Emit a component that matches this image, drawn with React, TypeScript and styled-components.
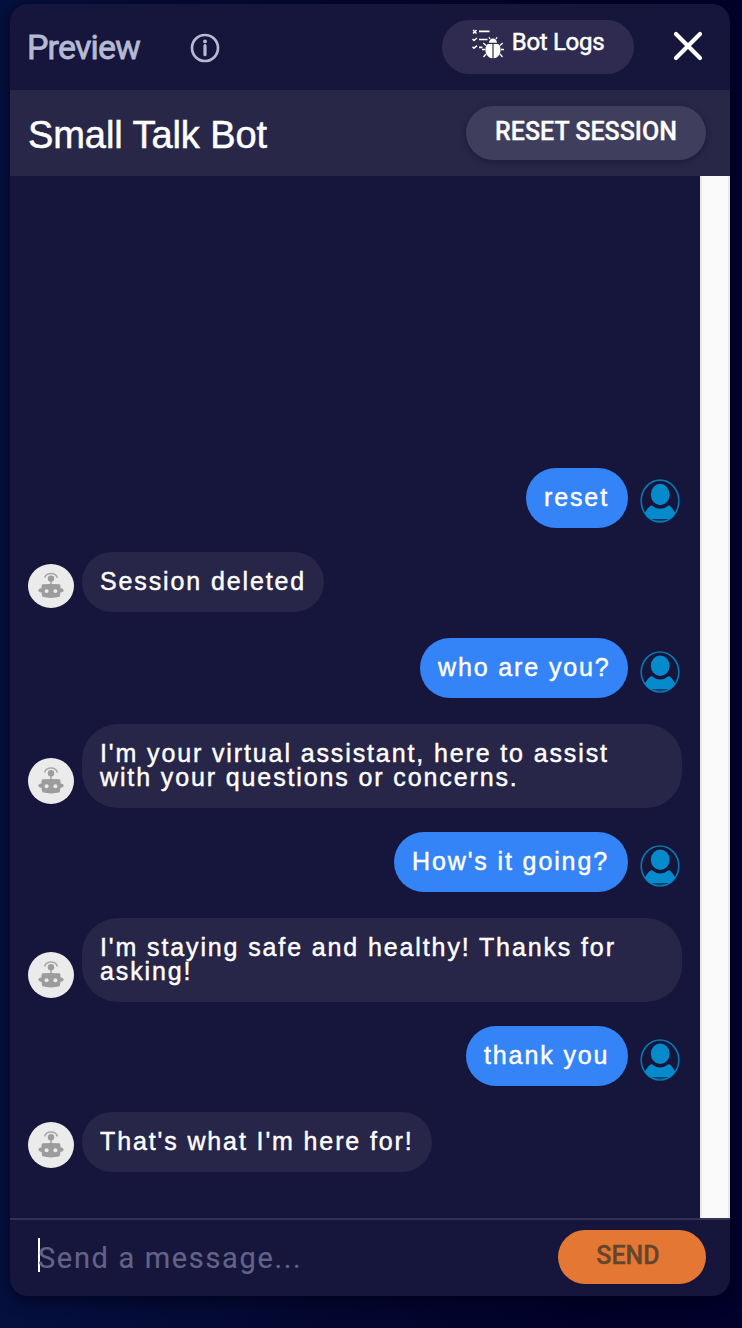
import React from "react";
import styled, { createGlobalStyle } from "styled-components";

const GlobalStyle = createGlobalStyle`
  * { box-sizing: border-box; }
  body {
    margin: 0;
    background: linear-gradient(90deg, #05103f 0%, #03072f 45%, #010129 80%, #01012c 100%);
    font-family: "Liberation Sans", Arial, sans-serif;
    overflow: hidden;
  }
`;

const Page = styled.main`
  height: 1328px;
  padding: 4px 12px 32px 10px;
`;

const Panel = styled.section`
  height: 1292px;
  display: flex;
  flex-direction: column;
  overflow: hidden;
  border-radius: 18px;
  background: #16153b;
  box-shadow: 0 4px 16px rgba(0, 0, 18, 0.65);
`;

const Header = styled.header`
  height: 86px;
  flex: none;
  display: flex;
  align-items: flex-start;
  padding: 16px 24px 0 17px;
  font-family: Roboto, sans-serif;
`;

const PreviewLabel = styled.h1`
  margin: 7px 0 0;
  width: 163px;
  font-size: 34px;
  line-height: 40px;
  font-weight: 400;
  letter-spacing: -0.85px;
  color: #b5bad3;
  -webkit-text-stroke: 0.8px #b5bad3;
`;

const InfoIcon = styled.svg`
  width: 30px;
  height: 30px;
  margin-top: 13px;
`;

const PillButton = styled.button<{ $width: number; $tone: string; $ink?: string; $raised?: boolean; $top?: number; $right?: number }>`
  width: ${(p) => p.$width}px;
  height: 54px;
  flex: none;
  display: flex;
  align-items: flex-start;
  justify-content: center;
  margin: 0;
  padding: ${(p) => p.$top ?? 8}px ${(p) => p.$right ?? 0}px 0 0;
  border: 0;
  border-radius: 27px;
  background: ${(p) => p.$tone};
  color: ${(p) => p.$ink ?? "#fff"};
  box-shadow: ${(p) => (p.$raised ? "0 2px 6px rgba(10, 8, 35, 0.4)" : "none")};
  font-family: Roboto, sans-serif;
  white-space: nowrap;
`;

const ButtonText = styled.span<{ $size: number; $weight: number; $spacing?: number }>`
  font-size: ${(p) => p.$size}px;
  line-height: 30px;
  font-weight: ${(p) => p.$weight};
  letter-spacing: ${(p) => p.$spacing ?? 0}px;
  -webkit-text-stroke: ${(p) => (p.$weight < 500 ? "0.5px" : "0.3px")} currentColor;
`;

const LogsIcon = styled.svg`
  width: 32px;
  height: 32px;
  margin-right: 8px;
`;

const Spacer = styled.div`
  flex: 1;
`;

const CloseIcon = styled.svg`
  width: 30px;
  height: 30px;
  margin: 11px 3px 0 39px;
`;

const TitleBar = styled.div`
  height: 86px;
  flex: none;
  display: flex;
  align-items: center;
  justify-content: space-between;
  padding: 0 24px 0 18px;
  background: #292748;
`;

const BotName = styled.h2`
  margin: 4px 0 0;
  font-size: 38px;
  line-height: 44px;
  font-weight: 400;
  letter-spacing: -0.07px;
  color: #fff;
  -webkit-text-stroke: 0.5px #fff;
`;

const Conversation = styled.div`
  flex: 1;
  min-height: 0;
  display: flex;
`;

const Messages = styled.div`
  flex: 1;
  display: flex;
  flex-direction: column;
  justify-content: flex-end;
  padding: 0 18px 46px;
`;

const ScrollTrack = styled.div`
  width: 30px;
  background: #fafafa;
  border: solid #e8e8e8;
  border-width: 0 2px;
`;

const Row = styled.div<{ $mine: boolean; $gap: number }>`
  display: flex;
  align-items: flex-end;
  justify-content: ${(p) => (p.$mine ? "flex-end" : "flex-start")};
  gap: ${(p) => (p.$mine ? 12 : 8)}px;
  padding-right: ${(p) => (p.$mine ? 2 : 0)}px;
  margin-top: ${(p) => p.$gap}px;
`;

const Bubble = styled.div<{ $mine: boolean; $width: number }>`
  width: ${(p) => p.$width}px;
  flex: none;
  padding: 17px 0 19px 18px;
  border-radius: ${(p) => (p.$mine ? 30 : 36)}px;
  background: ${(p) => (p.$mine ? "#3584f7" : "#272648")};
  color: #fff;
  font-size: 25px;
  line-height: 24px;
  letter-spacing: 1.88px;
  white-space: pre;
  -webkit-text-stroke: 0.45px #fff;
`;

const AvatarSvg = styled.svg<{ $w: number; $h: number; $lift: number }>`
  flex: none;
  width: ${(p) => p.$w}px;
  height: ${(p) => p.$h}px;
  margin-bottom: ${(p) => p.$lift}px;
`;

const Composer = styled.footer`
  height: 78px;
  flex: none;
  display: flex;
  align-items: flex-start;
  padding: 10px 24px 0 28px;
  border-top: 2px solid #343153;
`;

const Caret = styled.span`
  width: 2px;
  height: 34px;
  margin: 8px -2px 0 0;
  background: #fff;
`;

const Placeholder = styled.span`
  flex: 1;
  padding-top: 10px;
  font: 400 29px/36px Roboto, sans-serif;
  letter-spacing: 1.65px;
  color: #616388;
  -webkit-text-stroke: 0.2px #616388;
`;

const BotAvatar = ({ height }: { height: number }) => (
  <AvatarSvg $w={46} $h={height} $lift={4} viewBox="0 0 46 46" preserveAspectRatio="none">
    <circle cx="23" cy="23" r="23" fill="#ebebeb" />
    <path d="M16.600 14.500a6.600 6 0 0 1 12.800 0" fill="none" stroke="#a8a8a8" strokeWidth="1.500" />
    <circle cx="23" cy="15.300" r="3.200" fill="#9c9c9c" />
    <path d="M22.300 17h1.400v5h-1.400z" fill="#9c9c9c" />
    <path d="M12 25.700h22v3.800H12z" fill="#9c9c9c" />
    <circle cx="12.300" cy="27.600" r="1.900" fill="#9c9c9c" />
    <circle cx="33.700" cy="27.600" r="1.900" fill="#9c9c9c" />
    <path d="M14.500 21.200Q23 20.800 31.500 21.200Q32.500 21.500 32.600 25Q32.800 30 31.700 34.300Q23 36.600 14.300 34.300Q13.200 30 13.400 25Q13.500 21.500 14.500 21.200Z" fill="#9c9c9c" />
    <circle cx="18.600" cy="28.300" r="2" fill="#ebebeb" />
    <circle cx="27.400" cy="28.300" r="2" fill="#ebebeb" />
  </AvatarSvg>
);

const UserAvatar = ({ height }: { height: number }) => (
  <AvatarSvg $w={40} $h={height} $lift={5} viewBox="0 0 40 42" preserveAspectRatio="none">
    <ellipse cx="20" cy="21" rx="18.800" ry="20" fill="none" stroke="#0878b0" strokeWidth="1.600" />
    <ellipse cx="20.200" cy="14.800" rx="9.400" ry="10.200" fill="#058acb" />
    <path d="M11.500 25Q20 32 29 25Q31.500 26.500 33 29L35.300 32.500Q32.500 36.500 30 38.300H10.500Q7.500 36.500 4.800 32.500L7.500 28.500Q9 26 11.500 25Z" fill="#058acb" />
    <path d="M12.500 39.300h15" stroke="#058acb" strokeWidth=".6" />
  </AvatarSvg>
);

const conversation = [
  { mine: true, text: "reset", width: 102, gap: 0, avatar: 44 },
  { mine: false, text: "Session deleted", width: 242, gap: 24, avatar: 44 },
  { mine: true, text: "who are you?", width: 208, gap: 26, avatar: 42 },
  { mine: false, text: "I'm your virtual assistant, here to assist\nwith your questions or concerns.", width: 600, gap: 26, avatar: 46 },
  { mine: true, text: "How's it going?", width: 234, gap: 24, avatar: 42 },
  { mine: false, text: "I'm staying safe and healthy! Thanks for\nasking!", width: 600, gap: 26, avatar: 46 },
  { mine: true, text: "thank you", width: 162, gap: 24, avatar: 42 },
  { mine: false, text: "That's what I'm here for!", width: 350, gap: 26, avatar: 46 },
];

export default function App() {
  return (
    <>
      <GlobalStyle />
      <Page>
        <Panel>
          <Header>
            <PreviewLabel>Preview</PreviewLabel>
            <InfoIcon viewBox="0 0 30 30" fill="none" stroke="#b5bad3">
              <circle cx="15" cy="15" r="13" strokeWidth="2.700" />
              <path d="M15 12.700v9" strokeWidth="3.200" strokeLinecap="round" />
              <circle cx="15" cy="8.400" r="1.900" fill="#b5bad3" stroke="none" />
            </InfoIcon>
            <Spacer />
            <PillButton $width={192} $tone="#2f2b50" $top={7}>
              <LogsIcon viewBox="0 0 32 32" fill="none" stroke="#fff">
                <path d="M1 3l3.500 3.500M4.500 3L1 6.500M.5 12l1.500 1.500L5 11M.5 19.700L2 21.200 5 18.700" strokeWidth="1.500" />
                <path d="M7 4.400H17.500M7 12.500H15.500M7 20.400H10.500" strokeWidth="1.700" />
                <path d="M14 18.500l-2.700-2.500M13 22.500h-3M14 27l-2.500 3M28 18.500l2.700-2.500M29 22.500h3M28 27l2.500 3M18 12l-1-1.800M24 12l1-1.800" strokeWidth="1.300" />
                <path d="M17 15.800a4 4.300 0 0 1 8 0zM20.400 17v14.200C16 31 13.400 27 13.400 22.500 13.400 19.500 14.700 17 16.500 17zM21.600 17v14.200C26 31 28.600 27 28.600 22.500 28.600 19.500 27.300 17 25.500 17z" fill="#fff" stroke="none" />
              </LogsIcon>
              <ButtonText $size={24} $weight={400} $spacing={-0.3}>Bot Logs</ButtonText>
            </PillButton>
            <CloseIcon viewBox="0 0 30 30" fill="none" stroke="#fff">
              <path d="M3 3l24 24M27 3L3 27" strokeWidth="4.200" strokeLinecap="round" />
            </CloseIcon>
          </Header>
          <TitleBar>
            <BotName>Small Talk Bot</BotName>
            <PillButton $width={240} $tone="#403e5d" $raised $top={11}>
              <ButtonText $size={25} $weight={500}>RESET SESSION</ButtonText>
            </PillButton>
          </TitleBar>
          <Conversation>
            <Messages>
              {conversation.map((m) => (
                <Row key={m.text} $mine={m.mine} $gap={m.gap}>
                  {!m.mine && <BotAvatar height={m.avatar} />}
                  <Bubble $mine={m.mine} $width={m.width}>{m.text}</Bubble>
                  {m.mine && <UserAvatar height={m.avatar} />}
                </Row>
              ))}
            </Messages>
            <ScrollTrack />
          </Conversation>
          <Composer>
            <Caret />
            <Placeholder>Send a message...</Placeholder>
            <PillButton $width={148} $tone="#e37733" $ink="#64452c" $top={11} $right={8}>
              <ButtonText $size={25} $weight={500}>SEND</ButtonText>
            </PillButton>
          </Composer>
        </Panel>
      </Page>
    </>
  );
}
